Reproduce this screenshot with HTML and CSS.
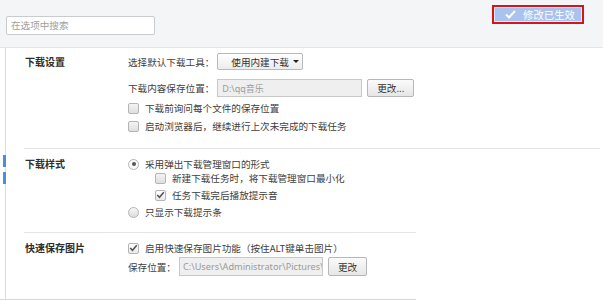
FILE: index.html
```html
<!DOCTYPE html>
<html>
<head>
<meta charset="utf-8">
<link rel="stylesheet" href="styles.css">
</head>
<body>
<div class="topbar">
  <div class="search">在选项中搜索</div>
  <div class="badge">
    <svg class="badge-check" width="11" height="9" viewBox="0 0 11 9"><path d="M1 4.5 L4 7.5 L10 1" fill="none" stroke="#fff" stroke-width="2"/></svg>
    <span>修改已生效</span>
  </div>
</div>
<div class="panel">
  <section class="sec sec1">
    <div class="label l1">下载设置</div>
    <div class="content">
      <div class="row r-select"><span class="txt">选择默认下载工具：</span><div class="select">使用内建下载<span class="caret"></span></div></div>
      <div class="row r-path"><span class="txt">下载内容保存位置：</span><div class="field f1">D:\qq音乐</div><div class="btn b1">更改...</div></div>
      <div class="opt mt4"><span class="cb"></span>下载前询问每个文件的保存位置</div>
      <div class="opt mt4"><span class="cb"></span>启动浏览器后，继续进行上次未完成的下载任务</div>
    </div>
  </section>
  <section class="sec sec2">
    <span class="mark m1"></span><span class="mark m2"></span>
    <div class="label l2">下载样式</div>
    <div class="content">
      <div class="opt"><span class="radio on"></span>采用弹出下载管理窗口的形式</div>
      <div class="opt sub"><span class="cb"></span>新建下载任务时，将下载管理窗口最小化</div>
      <div class="opt sub mt3"><span class="cb on"><svg width="9" height="8" viewBox="0 0 9 8"><path d="M1.2 4 L3.5 6.3 L7.8 1.2" fill="none" stroke="#555" stroke-width="1.6"/></svg></span>任务下载完后播放提示音</div>
      <div class="opt mt3"><span class="radio"></span>只显示下载提示条</div>
    </div>
  </section>
  <section class="sec sec3">
    <div class="label l3">快速保存图片</div>
    <div class="content">
      <div class="opt"><span class="cb on"><svg width="9" height="8" viewBox="0 0 9 8"><path d="M1.2 4 L3.5 6.3 L7.8 1.2" fill="none" stroke="#555" stroke-width="1.6"/></svg></span>启用快速保存图片功能（按住ALT键单击图片）</div>
      <div class="row r-pic"><span class="txt">保存位置：</span><div class="field f2">C:\Users\Administrator\Pictures\</div><div class="btn b2">更改</div></div>
    </div>
  </section>
</div>
<div class="rule"></div>
</body>
</html>
```
FILE: styles.css
```css
html, body {
  margin: 0;
  padding: 0;
  background: #fff;
}
body {
  width: 607px;
  height: 305px;
  overflow: hidden;
  font-family: "Noto Sans CJK SC", "Noto Sans", sans-serif;
  font-size: 9.6px;
  color: #404040;
}
.topbar {
  position: relative;
  width: 597px;
  height: 31px;
  padding: 16px 0 0 6px;
  background: #f4f5f7;
  border-bottom: 1px solid #e3e5e8;
}
.search {
  box-sizing: border-box;
  width: 149px;
  height: 19px;
  border: 1px solid #c9cbce;
  border-radius: 2px;
  background: #fff;
  color: #a0a0a0;
  line-height: 17px;
  padding-left: 4px;
}
.badge {
  position: absolute;
  left: 492px;
  top: 5px;
  box-sizing: border-box;
  width: 92px;
  height: 19px;
  border: 2px solid #d3161e;
  background: #a8c3ee;
  box-shadow: inset 0 0 0 1px #dfe8f7;
  display: flex;
  align-items: center;
  padding-left: 11px;
  color: #fff;
  font-size: 10.4px;
}
.badge-check {
  margin-right: 7px;
}
.panel {
  margin-left: 5px;
  border-left: 1px solid #dcdcdc;
}
.sec {
  position: relative;
  margin-left: 18px;
  display: grid;
  grid-template-columns: 104px auto;
  align-items: start;
}
.sec1 {
  width: 576px;
  padding: 5px 0 15px;
  border-bottom: 1px solid #e4e4e4;
}
.sec2 {
  width: 392px;
  padding: 8px 0 13px;
  border-bottom: 1px solid #e4e4e4;
}
.sec3 {
  width: 392px;
  padding: 8px 0 23px;
}
.label {
  padding-left: 1px;
  font-size: 10px;
  font-weight: bold;
  color: #2e2e2e;
}
.l1 { line-height: 17px; }
.l2, .l3 { line-height: 14px; }
.content {
  display: flex;
  flex-direction: column;
}
.row {
  display: flex;
  align-items: center;
}
.txt {
  margin-right: 3px;
}
.r-select { height: 17px; }
.r-path { height: 18px; margin-top: 9px; }
.r-pic { height: 19px; margin-top: 2px; }
.select {
  box-sizing: border-box;
  width: 86px;
  height: 17px;
  border: 1px solid #b9b9b9;
  border-radius: 2px;
  background: linear-gradient(#ffffff, #ececec);
  display: flex;
  align-items: center;
  padding-left: 13px;
  color: #333;
}
.caret {
  margin-left: 4px;
  width: 0;
  height: 0;
  border-left: 3px solid transparent;
  border-right: 3px solid transparent;
  border-top: 3px solid #222;
}
.field {
  box-sizing: border-box;
  height: 100%;
  border: 1px solid #c8c8c8;
  background: #efefef;
  color: #9a9a9a;
  padding-left: 4px;
  display: flex;
  align-items: center;
  white-space: nowrap;
  overflow: hidden;
  font-family: "Noto Sans", "Noto Sans CJK SC", sans-serif;
}
.f1 { width: 145px; font-size: 9px; }
.f2 { width: 144px; font-size: 9.2px; padding-left: 3px; }
.btn {
  box-sizing: border-box;
  height: 100%;
  margin-left: 5px;
  border: 1px solid #b7b7b7;
  border-radius: 2px;
  background: linear-gradient(#fbfbfb, #e6e6e6);
  display: flex;
  align-items: center;
  justify-content: center;
  color: #333;
}
.b1 { width: 47px; }
.b2 { width: 39px; }
.opt {
  display: flex;
  align-items: center;
  height: 14px;
}
.mt3 { margin-top: 3px; }
.mt4 { margin-top: 4px; }
.sub { padding-left: 27px; }
.cb {
  box-sizing: border-box;
  width: 11px;
  height: 11px;
  margin-right: 6px;
  border: 1px solid #b4b4b4;
  border-radius: 2px;
  background: linear-gradient(#f4f4f4, #dedede);
  display: flex;
  align-items: center;
  justify-content: center;
}
.cb.on {
  background: linear-gradient(#ffffff, #e9e9e9);
}
.radio {
  box-sizing: border-box;
  width: 11px;
  height: 11px;
  margin-right: 6px;
  border: 1px solid #b4b4b4;
  border-radius: 50%;
  background: linear-gradient(#f7f7f7, #dcdcdc);
  display: flex;
  align-items: center;
  justify-content: center;
}
.radio.on {
  background: #fafafa;
}
.radio.on::after {
  content: "";
  width: 4px;
  height: 4px;
  border-radius: 50%;
  background: #555;
}
.mark {
  position: absolute;
  left: -21px;
  width: 3px;
  background: #4b8fd8;
}
.m1 { top: 6px; height: 12px; }
.m2 { top: 23px; height: 12px; }
.rule {
  width: 416px;
  height: 1px;
  background: #d8d8d8;
}
```
